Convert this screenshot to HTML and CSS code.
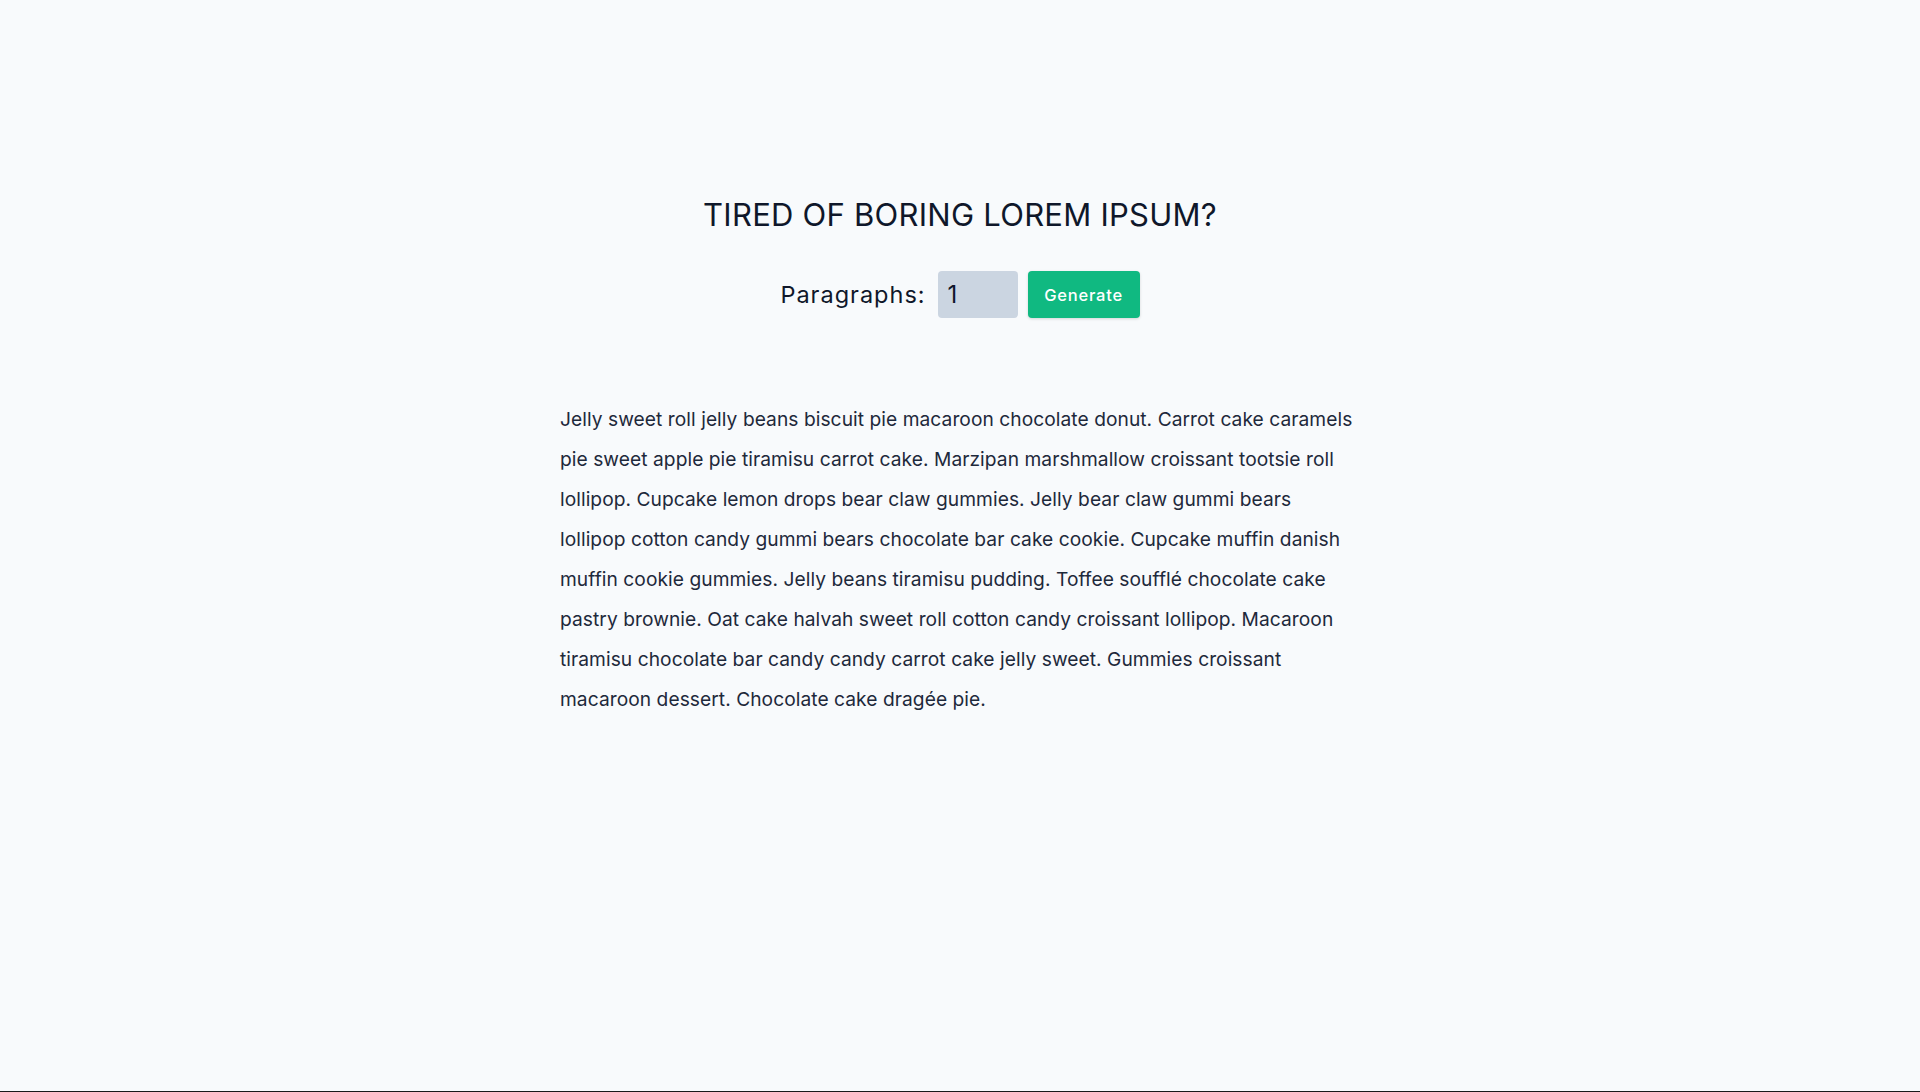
FILE: index.html
```html
<!DOCTYPE html>
<html lang="en">
<head>
<meta charset="utf-8">
<title>Lorem Ipsum Generator</title>
<link rel="stylesheet" href="styles.css">
</head>
<body>
<div class="page">
  <section class="section-center">
    <h3 class="title">Tired of boring lorem ipsum?</h3>
    <form class="lorem-form">
      <label for="amount" class="label">Paragraphs:</label>
      <input type="number" id="amount" name="amount" class="amount" value="1" min="1" step="1">
      <button type="button" class="btn">Generate</button>
    </form>
    <article class="lorem-text">
      <p>Jelly sweet roll jelly beans biscuit pie macaroon chocolate donut. Carrot cake caramels pie sweet apple pie tiramisu carrot cake. Marzipan marshmallow croissant tootsie roll lollipop. Cupcake lemon drops bear claw gummies. Jelly bear claw gummi bears lollipop cotton candy gummi bears chocolate bar cake cookie. Cupcake muffin danish muffin cookie gummies. Jelly beans tiramisu pudding. Toffee soufflé chocolate cake pastry brownie. Oat cake halvah sweet roll cotton candy croissant lollipop. Macaroon tiramisu chocolate bar candy candy carrot cake jelly sweet. Gummies croissant macaroon dessert. Chocolate cake dragée pie.</p>
    </article>
  </section>
</div>
</body>
</html>
```
FILE: styles.css
```css
* { box-sizing: border-box; }
html, body { margin: 0; padding: 0; }
body {
  background: #f8fafc;
  color: #102a42;
  font-family: Inter, "Noto Sans", "Liberation Sans", sans-serif;
}
.page {
  min-height: 100vh;
  border-bottom: 1px solid #1a1a1a;
  padding-top: 195px;
}
.section-center {
  width: 800px;
  margin: 0 auto;
  text-align: center;
}
.title {
  margin: 0;
  font-size: 31px;
  font-weight: 400;
  line-height: 40px;
  letter-spacing: 0.25px;
  text-transform: uppercase;
  color: #0f172a;
}
.lorem-form {
  margin-top: 36px;
  display: flex;
  justify-content: center;
  align-items: center;
}
.label {
  font-size: 23.5px;
  letter-spacing: 1px;
  color: #0f172a;
  margin-right: 12px;
}
.amount {
  width: 80px;
  height: 47px;
  border: none;
  border-radius: 4px;
  background: #cbd5e1;
  padding: 0 10px;
  font-family: inherit;
  font-size: 24px;
  color: #0f172a;
  margin-right: 10px;
  -moz-appearance: textfield;
}
.amount::-webkit-inner-spin-button,
.amount::-webkit-outer-spin-button { -webkit-appearance: none; margin: 0; }
.btn {
  width: 112px;
  height: 47px;
  border: none;
  border-radius: 4px;
  background: #10b981;
  color: #fff;
  font-family: inherit;
  font-size: 16.5px;
  font-weight: 500;
  letter-spacing: 0.8px;
  box-shadow: 0 1px 3px rgba(0,0,0,0.15);
  cursor: pointer;
}
.lorem-text {
  margin-top: 81px;
  text-align: left;
}
.lorem-text p {
  margin: 0;
  font-size: 19.2px;
  letter-spacing: 0.05px;
  line-height: 40px;
  color: #1e293b;
}
```
